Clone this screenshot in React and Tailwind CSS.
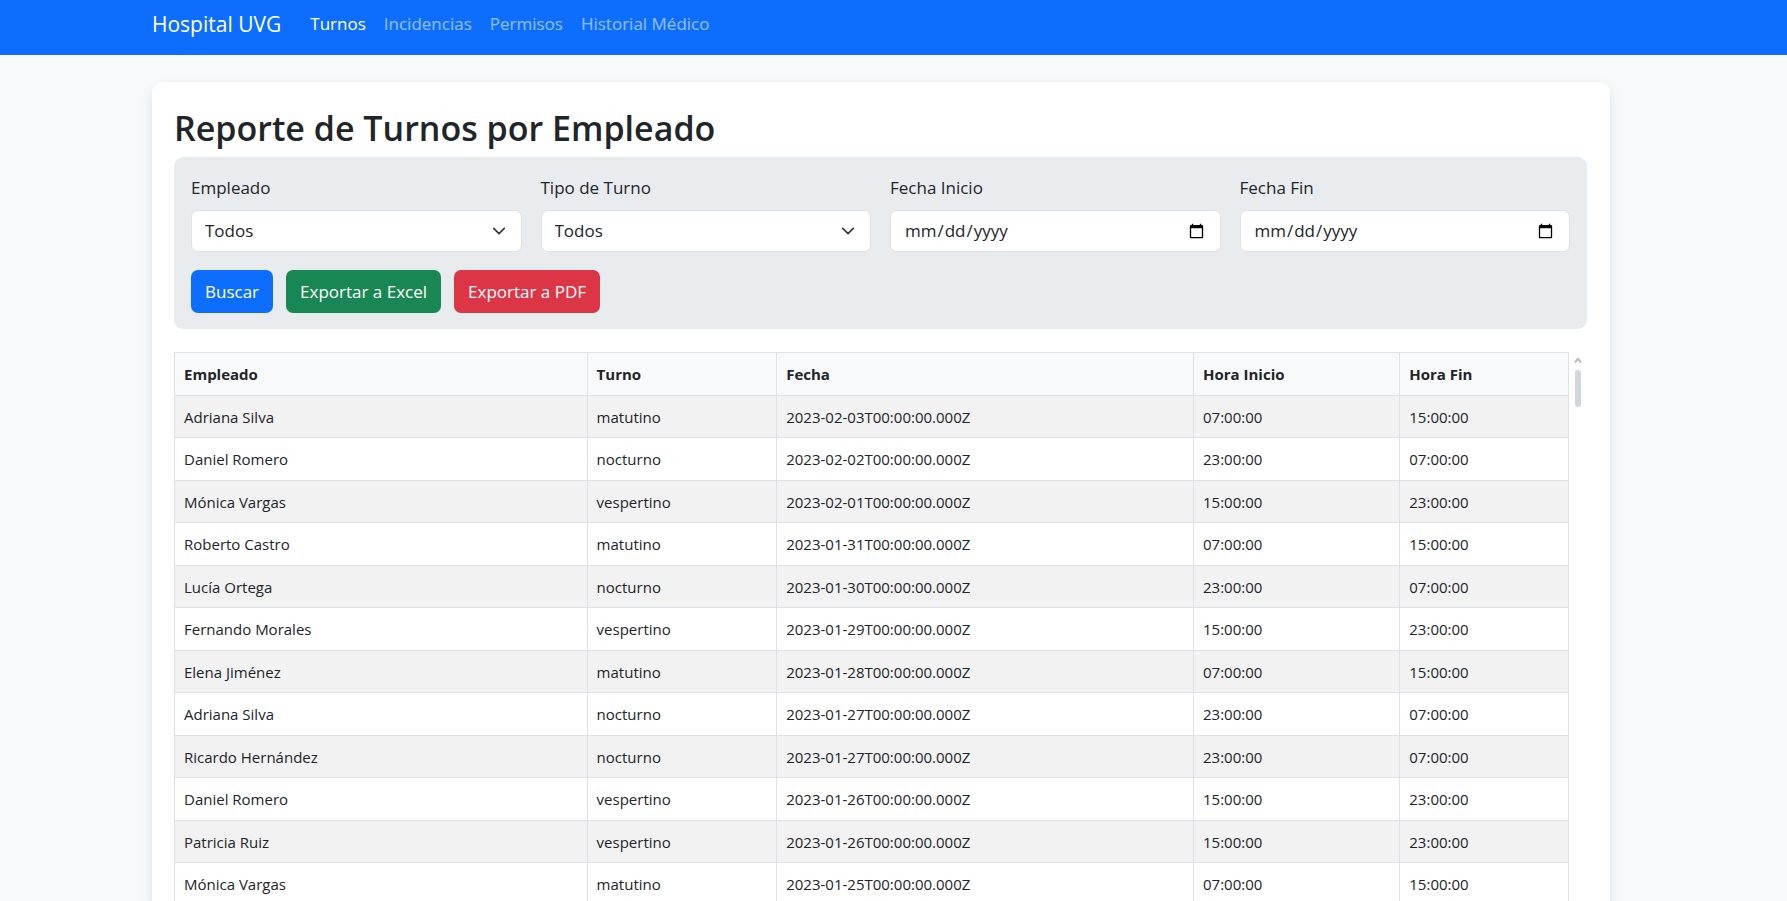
const NAV = ['Turnos', 'Incidencias', 'Permisos', 'Historial Médico'];

const HOURS = {
  matutino: ['07:00:00', '15:00:00'],
  vespertino: ['15:00:00', '23:00:00'],
  nocturno: ['23:00:00', '07:00:00'],
};

const SHIFTS = [
  ['Adriana Silva', 'matutino', '2023-02-03'],
  ['Daniel Romero', 'nocturno', '2023-02-02'],
  ['Mónica Vargas', 'vespertino', '2023-02-01'],
  ['Roberto Castro', 'matutino', '2023-01-31'],
  ['Lucía Ortega', 'nocturno', '2023-01-30'],
  ['Fernando Morales', 'vespertino', '2023-01-29'],
  ['Elena Jiménez', 'matutino', '2023-01-28'],
  ['Adriana Silva', 'nocturno', '2023-01-27'],
  ['Ricardo Hernández', 'nocturno', '2023-01-27'],
  ['Daniel Romero', 'vespertino', '2023-01-26'],
  ['Patricia Ruiz', 'vespertino', '2023-01-26'],
  ['Mónica Vargas', 'matutino', '2023-01-25'],
];

const COLUMNS = [
  ['Empleado', 'w-[29.6%]'],
  ['Turno', 'w-[13.6%]'],
  ['Fecha', 'w-[29.9%]'],
  ['Hora Inicio', 'w-[14.8%]'],
  ['Hora Fin', 'w-[12.1%]'],
];

const FIELD =
  'h-[42px] w-full appearance-none rounded-[7px] border border-[#dee2e6] bg-white px-[13px] text-[#212529]';

function SelectField({ id, label }) {
  return (
    <div>
      <label htmlFor={id} className="mb-[9px] block">{label}</label>
      <div className="relative">
        <select id={id} className={FIELD} defaultValue="Todos">
          <option>Todos</option>
        </select>
        <svg
          className="pointer-events-none absolute top-[14px] right-4 size-[14px]"
          viewBox="0 0 16 16"
          fill="none"
          stroke="#343a40"
          strokeWidth="2"
          strokeLinecap="round"
          strokeLinejoin="round"
          aria-hidden="true"
        >
          <path d="m2 5 6 6 6-6" />
        </svg>
      </div>
    </div>
  );
}

function DateField({ id, label }) {
  return (
    <div>
      <label htmlFor={id} className="mb-[9px] block">{label}</label>
      <input id={id} type="date" className={FIELD} />
    </div>
  );
}

function ShiftTable() {
  return (
    <div className="mt-[23px] flex">
      <table className="flex-1 table-fixed border-collapse text-left text-[15px] leading-6">
        <thead>
          <tr className="h-[43px] bg-[#f8f9fa]">
            {COLUMNS.map(([name, width]) => (
              <th key={name} className={`${width} border border-[#dee2e6] px-[9px] font-bold`}>{name}</th>
            ))}
          </tr>
        </thead>
        <tbody>
          {SHIFTS.map(([employee, shift, date]) => (
            <tr key={employee + date} className="odd:h-[42px] odd:bg-[#f2f2f2] even:h-[43px]">
              {[employee, shift, `${date}T00:00:00.000Z`, ...HOURS[shift]].map((value, i) => (
                <td key={i} className="border border-[#dee2e6] px-[9px]">{value}</td>
              ))}
            </tr>
          ))}
        </tbody>
      </table>
      <div className="flex w-[18px] flex-col items-center gap-[6px] pt-[5px]" aria-hidden="true">
        <svg className="h-[7px] w-2" viewBox="0 0 8 7" fill="none" stroke="#b9bcbf" strokeWidth="2">
          <path d="M0.8 5.6 4 1.8l3.2 3.8" />
        </svg>
        <div className="h-[37px] w-[6px] rounded-full bg-[#d0d7de]" />
      </div>
    </div>
  );
}

export default function App() {
  return (
    <div className="min-h-screen bg-[#f8f9fa] font-['Open_Sans','Noto_Sans',sans-serif] text-[17px] leading-[26px] text-[#212529]">
      <header className="bg-[#0d6efd] pr-[25px]">
        <nav className="mx-auto flex h-[55px] max-w-[1458px] items-center pb-[7px]">
          <a href="#inicio" className="mr-5 text-[21px] text-white">Hospital UVG</a>
          {NAV.map((item, i) => (
            <a
              key={item}
              href={`#${item}`}
              className={`px-[9px] ${i === 0 ? 'text-white' : 'text-white/55'}`}
            >
              {item}
            </a>
          ))}
        </nav>
      </header>
      <div className="pt-[27px] pr-[25px]">
        <main className="mx-auto max-w-[1458px] rounded-t-[11px] bg-white pt-6 pr-[23px] pl-[22px] shadow-[0_4px_12px_rgba(0,0,0,0.1)]">
          <h1 className="mb-[7px] text-[34px] leading-[44px] font-semibold">Reporte de Turnos por Empleado</h1>
          <form className="rounded-[9px] bg-[#e9ecef] px-[17px] pt-[18px] pb-4" onSubmit={(e) => e.preventDefault()}>
            <div className="grid grid-cols-4 gap-[19px]">
              <SelectField id="empleado" label="Empleado" />
              <SelectField id="tipo" label="Tipo de Turno" />
              <DateField id="inicio" label="Fecha Inicio" />
              <DateField id="fin" label="Fecha Fin" />
            </div>
            <div className="mt-[18px] flex gap-[13px] text-white">
              <button type="submit" className="h-[43px] rounded-[7px] bg-[#0d6efd] px-[14px]">Buscar</button>
              <button type="button" className="h-[43px] rounded-[7px] bg-[#198754] px-[14px]">Exportar a Excel</button>
              <button type="button" className="h-[43px] rounded-[7px] bg-[#dc3545] px-[14px]">Exportar a PDF</button>
            </div>
          </form>
          <ShiftTable />
        </main>
      </div>
    </div>
  );
}
